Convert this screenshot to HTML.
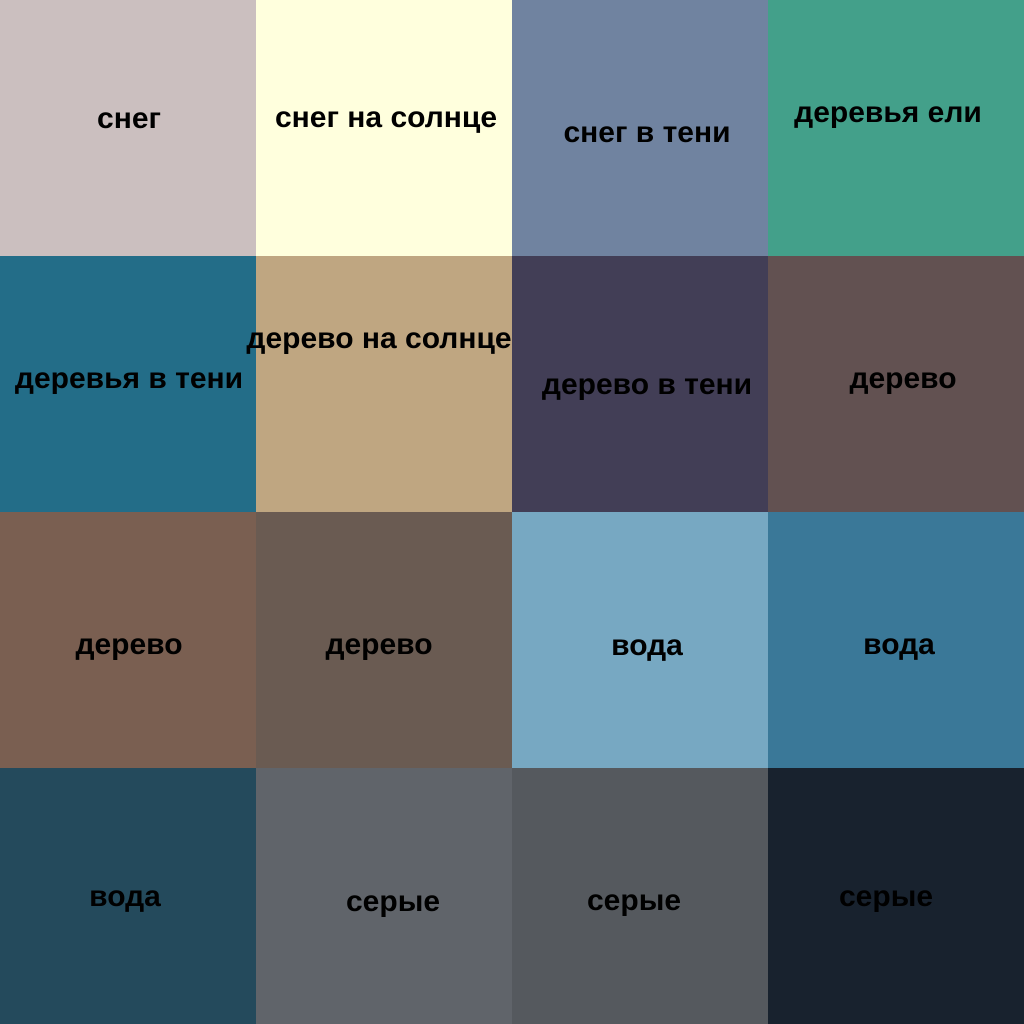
<!DOCTYPE html>
<html><head><meta charset="utf-8"><style>
body{margin:0;width:1024px;height:1024px;position:relative;overflow:hidden;font-family:"Liberation Sans",sans-serif;}
.c{position:absolute;width:256px;height:256px}
.t{position:absolute;transform:translate(-50%,calc(-50% + 2px));font-weight:bold;font-size:30px;color:#000;white-space:nowrap}
</style></head><body>
<div class="c" style="left:0;top:0;background:#cbbfbf"></div>
<div class="c" style="left:256px;top:0;background:#ffffdd"></div>
<div class="c" style="left:512px;top:0;background:#7083a0"></div>
<div class="c" style="left:768px;top:0;background:#43a08a"></div>
<div class="c" style="left:0;top:256px;background:#236d88"></div>
<div class="c" style="left:256px;top:256px;background:#bfa681"></div>
<div class="c" style="left:512px;top:256px;background:#423e56"></div>
<div class="c" style="left:768px;top:256px;background:#625151"></div>
<div class="c" style="left:0;top:512px;background:#7a5f51"></div>
<div class="c" style="left:256px;top:512px;background:#6a5b52"></div>
<div class="c" style="left:512px;top:512px;background:#77a8c2"></div>
<div class="c" style="left:768px;top:512px;background:#3a7898"></div>
<div class="c" style="left:0;top:768px;background:#244a5c"></div>
<div class="c" style="left:256px;top:768px;background:#60646a"></div>
<div class="c" style="left:512px;top:768px;background:#55595e"></div>
<div class="c" style="left:768px;top:768px;background:#18222e"></div>
<div class="t" style="left:129px;top:117px">снег</div>
<div class="t" style="left:386px;top:116px">снег на солнце</div>
<div class="t" style="left:647px;top:131px">снег в тени</div>
<div class="t" style="left:888px;top:111px">деревья ели</div>
<div class="t" style="left:129px;top:377px">деревья в тени</div>
<div class="t" style="left:379px;top:337px">дерево на солнце</div>
<div class="t" style="left:647px;top:383px">дерево в тени</div>
<div class="t" style="left:903px;top:377px">дерево</div>
<div class="t" style="left:129px;top:643px">дерево</div>
<div class="t" style="left:379px;top:643px">дерево</div>
<div class="t" style="left:647px;top:644px">вода</div>
<div class="t" style="left:899px;top:643px">вода</div>
<div class="t" style="left:125px;top:895px">вода</div>
<div class="t" style="left:393px;top:900px">серые</div>
<div class="t" style="left:634px;top:899px">серые</div>
<div class="t" style="left:886px;top:895px">серые</div>
</body></html>
